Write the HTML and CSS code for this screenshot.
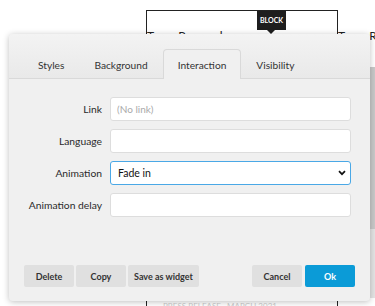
FILE: index.html
```html
<!DOCTYPE html>
<html lang="en">
<head>
    <meta charset="UTF-8">
    <meta name="viewport" content="width=device-width, initial-scale=1.0">
    <title>Block settings</title>
    <link rel="stylesheet" href="styles.css">
</head>
<body>
    <div class="page">
        <div class="row-blocks">
            <div class="block">
                <span class="badge">BLOCK</span>
                <div class="block-text">Type: Press releases</div>
                <div class="block-foot">PRESS RELEASE · MARCH 2021</div>
            </div>
            <div class="block-next">Type: Reports</div>
        </div>
        <div class="scroll-strip"></div>
    </div>

    <div class="dialog">
        <div class="tabs">
            <button class="tab">Styles</button>
            <button class="tab">Background</button>
            <button class="tab active">Interaction</button>
            <button class="tab">Visibility</button>
        </div>

        <div class="panel">
            <div class="field">
                <label>Link</label>
                <input type="text" placeholder="(No link)">
            </div>
            <div class="field">
                <label>Language</label>
                <input type="text">
            </div>
            <div class="field">
                <label>Animation</label>
                <div class="select">
                    <span>Fade in</span>
                    <svg width="8" height="6" viewBox="0 0 8 6"><path d="M1 1.2l3 3 3-3" fill="none" stroke="#111" stroke-width="1.7"/></svg>
                </div>
            </div>
            <div class="field">
                <label>Animation delay</label>
                <input type="text">
            </div>
        </div>

        <div class="actions">
            <button class="btn">Delete</button>
            <button class="btn">Copy</button>
            <button class="btn">Save as widget</button>
            <span class="spacer"></span>
            <button class="btn">Cancel</button>
            <button class="btn primary">Ok</button>
        </div>
    </div>
</body>
</html>
```

FILE: styles.css
```css
:root {
    --panel: #f0f0f0;
    --border: #d9d9d9;
    --text: #333;
    --primary: #0b9bd7;
    --radius: 3px;
}

* {
    box-sizing: border-box;
}

body {
    margin: 0;
    font-family: Lato, 'Open Sans', sans-serif;
    color: var(--text);
    background: white;
    width: 375px;
    height: 306px;
    overflow: hidden;
    position: relative;
}

.page {
    height: 306px;
    overflow: hidden;
}

.row-blocks {
    display: flex;
    padding: 10px 0 0 146px;
    overflow: hidden;
}

.block {
    flex-shrink: 0;
    width: 192px;
    height: 300px;
    border: 1px solid #222;
    position: relative;
    padding-top: 18px;
}

.badge {
    position: absolute;
    top: 0;
    left: 110px;
    width: 29px;
    height: 19px;
    background: #1e1e1e;
    color: white;
    font-size: 7px;
    font-weight: bold;
    line-height: 19px;
    text-align: center;
}

.badge::after {
    content: '';
    position: absolute;
    left: 10px;
    bottom: -4px;
    border: 4px solid transparent;
    border-bottom: 0;
    border-top-color: #1e1e1e;
}

.block-text, .block-next {
    font-size: 12px;
    color: #222;
    line-height: 14px;
    white-space: nowrap;
}

.block-next {
    padding-top: 19px;
    overflow: hidden;
}

.block-foot {
    margin-top: 258px;
    font-size: 8px;
    color: #ccc;
    padding-left: 16px;
}

.scroll-strip {
    position: absolute;
    top: 67px;
    right: 0;
    width: 5px;
    height: 231px;
    background: linear-gradient(#c9c9c9 0 70%, #e4e4e4 70%);
}

.dialog {
    position: absolute;
    top: 34px;
    left: 9px;
    width: 361px;
    height: 267px;
    background: var(--panel);
    border-radius: 4px;
    box-shadow: 0 1px 6px rgba(0, 0, 0, 0.25);
    display: flex;
    flex-direction: column;
}

.tabs {
    display: flex;
    align-items: flex-end;
    height: 45px;
    padding-left: 14px;
    background: linear-gradient(#f3f3f3, #e9e9e9);
    border-bottom: 1px solid var(--border);
    border-radius: 4px 4px 0 0;
}

.tab {
    font-family: inherit;
    font-size: 10.2px;
    color: var(--text);
    background: none;
    border: 1px solid transparent;
    border-bottom: 0;
    height: 29px;
    padding: 0 14px;
    margin-bottom: -1px;
    cursor: pointer;
}

.tab.active {
    background: var(--panel);
    border-color: var(--border);
    border-radius: 4px 4px 0 0;
    height: 30px;
}

.panel {
    padding: 18px 19px 0 0;
    display: flex;
    flex-direction: column;
    gap: 8px;
}

.field {
    display: flex;
    align-items: center;
}

.field label {
    width: 101px;
    flex-shrink: 0;
    text-align: right;
    padding-right: 8px;
    font-size: 10.3px;
    color: #2a2a2a;
}

.field input, .select {
    flex: 1;
    height: 24px;
    border: 1px solid #ddd;
    border-radius: var(--radius);
    background: white;
    font-family: inherit;
    font-size: 10px;
    padding: 0 6px;
    outline: none;
}

.field input::placeholder {
    color: #aaa;
}

.select {
    display: flex;
    align-items: center;
    justify-content: space-between;
    border-color: #4aa8e6;
    font-size: 10.5px;
    color: #111;
    padding: 0 4px 0 7px;
}

.actions {
    margin-top: auto;
    display: flex;
    gap: 2px;
    padding: 0 15px 14px 15px;
}

.spacer {
    flex: 1;
}

.btn {
    height: 22px;
    min-width: 50px;
    padding: 0 6px;
    border: none;
    border-radius: 2px;
    background: #e0e0e0;
    color: var(--text);
    font-family: inherit;
    font-size: 9px;
    font-weight: bold;
    cursor: pointer;
}

.btn.primary {
    background: var(--primary);
    color: white;
    margin-left: 1px;
}
```
